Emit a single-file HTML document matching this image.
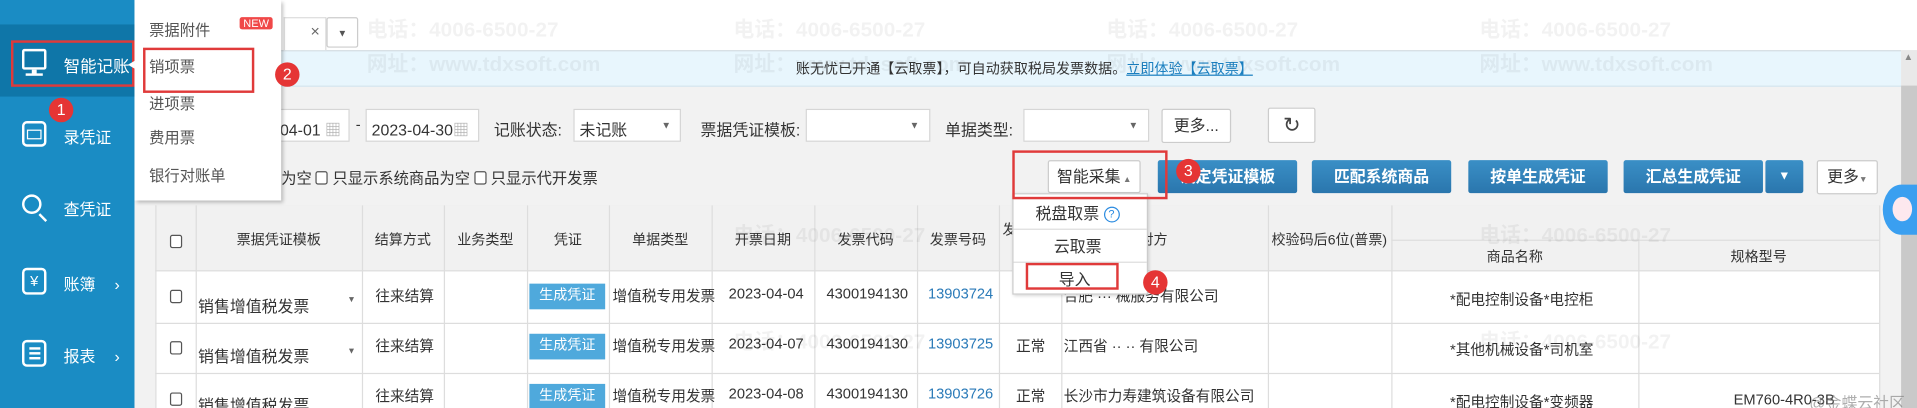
<!DOCTYPE html>
<html><head><meta charset="utf-8"><style>
*{margin:0;padding:0;box-sizing:border-box}
html,body{width:1917px;height:408px;overflow:hidden;background:#f2f2f2}
#w{position:absolute;left:0;top:0;width:1568px;height:334px;transform:scale(1.22258);transform-origin:0 0;font-family:"Liberation Sans","Noto Sans CJK SC",sans-serif;font-size:12px;color:#333;background:#f2f2f2;overflow:hidden}
.a{position:absolute;white-space:nowrap}
.sb{left:0;top:0;width:110px;height:334px;background:#1a8cc4}
.si{color:#fff;font-size:13px}
.ic{position:absolute;width:20px;height:20px;border:2px solid #fff;border-radius:4px}
.red{border:2px solid #e03a3a}
.dot{width:20px;height:20px;border-radius:50%;background:#e53535;color:#fff;font-size:13px;text-align:center;line-height:20px}
.inp{background:#fff;border:1px solid #d6d6d6;height:27px}
.btn{background:linear-gradient(#3a8fc6,#2a76ad);color:#fff;font-weight:bold;font-size:13px;text-align:center;line-height:27px;height:27px;border-radius:2px}
.wbtn{background:#fff;border:1px solid #ccc;text-align:center;border-radius:2px}
.cb{width:10px;height:11px;border:1px solid #555;border-radius:2px;background:#fff;display:inline-block;vertical-align:-1px}
.th{color:#333;font-size:11.5px;text-align:center}
.vl{position:absolute;width:1px;background:#ddd}
.hl{position:absolute;height:1px;background:#ddd}
.gb{background:#4fa9dc;color:#fff;width:62px;height:21px;line-height:21px;text-align:center;font-size:11.5px}
.wm{color:rgba(0,0,0,0.05);font-size:17px;font-weight:bold}
.mi{color:#555;font-size:12.5px;left:122px}
</style></head><body><div id="w">
<div class="a" style="left:110px;top:0;width:1458px;height:41px;background:#fff"></div>
<div class="a" style="left:110px;top:41px;width:1445px;height:30px;background:#e8f6fd;border-top:1px solid #d5dde2;border-bottom:1px solid #d5e5ee"></div>
<div class="a" style="left:651px;top:48px;font-size:11.5px;color:#333">账无忧已开通【云取票】，可自动获取税局发票数据。<span style="color:#1a7fc0;text-decoration:underline">立即体验【云取票】</span></div>
<div class="a" style="left:232px;top:14px;width:35px;height:27px;background:#fff;border:1px solid #ddd;border-bottom:none"></div>
<div class="a" style="left:254px;top:18px;color:#666;font-size:13px">×</div>
<div class="a wbtn" style="left:267px;top:14px;width:26px;height:25px;font-size:8px;line-height:25px;color:#555">▼</div>
<div class="a" style="left:1555px;top:41px;width:13px;height:293px;background:#e9e9e9"></div>
<div class="a" style="left:1557px;top:42px;font-size:8px;color:#888">▲</div>
<div class="a" style="left:1555px;top:70px;width:13px;height:264px;background:#c9c9c9"></div>
<!-- filters -->
<div class="a inp" style="left:200px;top:89px;width:86px"></div>
<div class="a" style="left:229px;top:96px;font-size:13px">04-01 <span style="color:#aaa">▦</span></div>
<div class="a" style="left:291px;top:95px">-</div>
<div class="a inp" style="left:299px;top:89px;width:93px"></div>
<div class="a" style="left:304px;top:96px;font-size:13px">2023-04-30<span style="color:#aaa">▦</span></div>
<div class="a" style="left:404px;top:96px;font-size:13px">记账状态:</div>
<div class="a inp" style="left:469px;top:89px;width:88px"></div>
<div class="a" style="left:474px;top:96px;font-size:13px">未记账</div>
<div class="a" style="left:541px;top:98px;font-size:8px;color:#666">▼</div>
<div class="a" style="left:573px;top:96px;font-size:13px">票据凭证模板:</div>
<div class="a inp" style="left:659px;top:89px;width:102px"></div>
<div class="a" style="left:744px;top:98px;font-size:8px;color:#666">▼</div>
<div class="a" style="left:773px;top:96px;font-size:13px">单据类型:</div>
<div class="a inp" style="left:837px;top:89px;width:103px"></div>
<div class="a" style="left:923px;top:98px;font-size:8px;color:#666">▼</div>
<div class="a wbtn" style="left:950px;top:89px;width:57px;height:28px;line-height:26px;font-size:13px">更多...</div>
<div class="a wbtn" style="left:1037px;top:88px;width:39px;height:29px;line-height:27px;font-size:17px;color:#444">↻</div>
<!-- row2 -->
<div class="a" style="left:230px;top:135px;font-size:12.5px">为空 <span class="cb"></span> 只显示系统商品为空 <span class="cb"></span> 只显示代开发票</div>
<div class="a wbtn" style="left:857px;top:131px;width:76px;height:27px;line-height:25px;font-size:13px">智能采集<span style="font-size:7px;color:#777"> ▲</span></div>
<div class="a btn" style="left:947px;top:131px;width:114px">设定凭证模板</div>
<div class="a btn" style="left:1073px;top:131px;width:114px">匹配系统商品</div>
<div class="a btn" style="left:1201px;top:131px;width:114px">按单生成凭证</div>
<div class="a btn" style="left:1328px;top:131px;width:114px">汇总生成凭证</div>
<div class="a btn" style="left:1444px;top:131px;width:31px;font-size:10px">▼</div>
<div class="a wbtn" style="left:1486px;top:131px;width:50px;height:28px;line-height:26px;font-size:13px">更多<span style="font-size:7px;color:#777">▼</span></div>
<!-- table -->
<div class="a" style="left:127px;top:168px;width:1410px;height:166px;background:#fff;border-top:1px solid #ddd"></div>
<div class="a" style="left:127px;top:168px;width:1410px;height:54px;background:#f1f1f1;border-bottom:1px solid #ddd"></div>
<div class="hl" style="left:1138px;top:196px;width:399px"></div>
<div class="hl" style="left:127px;top:264px;width:1410px"></div>
<div class="hl" style="left:127px;top:305px;width:1410px"></div>
<div class="vl" style="left:127px;top:168px;height:166px"></div>
<div class="vl" style="left:160px;top:168px;height:166px"></div>
<div class="vl" style="left:296px;top:168px;height:166px"></div>
<div class="vl" style="left:363px;top:168px;height:166px"></div>
<div class="vl" style="left:431px;top:168px;height:166px"></div>
<div class="vl" style="left:498px;top:168px;height:166px"></div>
<div class="vl" style="left:582px;top:168px;height:166px"></div>
<div class="vl" style="left:666px;top:168px;height:166px"></div>
<div class="vl" style="left:750px;top:168px;height:166px"></div>
<div class="vl" style="left:817px;top:168px;height:166px"></div>
<div class="vl" style="left:868px;top:168px;height:166px"></div>
<div class="vl" style="left:1037px;top:168px;height:166px"></div>
<div class="vl" style="left:1138px;top:168px;height:166px"></div>
<div class="vl" style="left:1340px;top:196px;height:138px"></div>
<div class="vl" style="left:1537px;top:168px;height:166px"></div>
<div class="a" style="left:139px;top:191px"><span class="cb"></span></div>
<div class="a th" style="left:160px;top:188px;width:136px">票据凭证模板</div>
<div class="a th" style="left:296px;top:188px;width:67px">结算方式</div>
<div class="a th" style="left:363px;top:188px;width:68px">业务类型</div>
<div class="a th" style="left:431px;top:188px;width:67px">凭证</div>
<div class="a th" style="left:498px;top:188px;width:84px">单据类型</div>
<div class="a th" style="left:582px;top:188px;width:84px">开票日期</div>
<div class="a th" style="left:666px;top:188px;width:84px">发票代码</div>
<div class="a th" style="left:750px;top:188px;width:67px">发票号码</div>
<div class="a th" style="left:820px;top:180px">发</div>
<div class="a th" style="left:932px;top:188px">对方</div>
<div class="a th" style="left:1040px;top:188px">校验码后6位(普票)</div>
<div class="a th" style="left:1138px;top:202px;width:202px">商品名称</div>
<div class="a th" style="left:1340px;top:202px;width:197px">规格型号</div>
<!-- rows -->
<div class="a" style="left:139px;top:236px"><span class="cb"></span></div>
<div class="a" style="left:162px;top:240px;font-size:13px">销售增值税发票</div><div class="a" style="left:284px;top:242px;font-size:7px;color:#666">▼</div>
<div class="a" style="left:307px;top:233px">往来结算</div>
<div class="a gb" style="left:433px;top:232px">生成凭证</div>
<div class="a" style="left:501px;top:233px">增值税专用发票</div>
<div class="a" style="left:596px;top:233px">2023-04-04</div>
<div class="a" style="left:676px;top:233px">4300194130</div>
<div class="a" style="left:759px;top:233px;color:#2a7ab8">13903724</div>
<div class="a" style="left:1186px;top:236px">*配电控制设备*电控柜</div>
<div class="a" style="left:139px;top:278px"><span class="cb"></span></div>
<div class="a" style="left:162px;top:281px;font-size:13px">销售增值税发票</div><div class="a" style="left:284px;top:284px;font-size:7px;color:#666">▼</div>
<div class="a" style="left:307px;top:274px">往来结算</div>
<div class="a gb" style="left:433px;top:273px">生成凭证</div>
<div class="a" style="left:501px;top:274px">增值税专用发票</div>
<div class="a" style="left:596px;top:274px">2023-04-07</div>
<div class="a" style="left:676px;top:274px">4300194130</div>
<div class="a" style="left:759px;top:274px;color:#2a7ab8">13903725</div>
<div class="a" style="left:831px;top:274px">正常</div>
<div class="a" style="left:870px;top:274px">江西省 ·· ·· 有限公司</div>
<div class="a" style="left:1186px;top:277px">*其他机械设备*司机室</div>
<div class="a" style="left:139px;top:320px"><span class="cb"></span></div>
<div class="a" style="left:162px;top:321px;font-size:13px">销售增值税发票</div>
<div class="a" style="left:307px;top:315px">往来结算</div>
<div class="a gb" style="left:433px;top:314px">生成凭证</div>
<div class="a" style="left:501px;top:315px">增值税专用发票</div>
<div class="a" style="left:596px;top:315px">2023-04-08</div>
<div class="a" style="left:676px;top:315px">4300194130</div>
<div class="a" style="left:759px;top:315px;color:#2a7ab8">13903726</div>
<div class="a" style="left:831px;top:315px">正常</div>
<div class="a" style="left:870px;top:315px">长沙市力寿建筑设备有限公司</div>
<div class="a" style="left:1186px;top:320px">*配电控制设备*变频器</div>
<div class="a" style="left:1418px;top:320px">EM760-4R0-3B</div>
<div class="a" style="left:870px;top:233px">合肥 ··· 械服务有限公司</div>
<!-- watermark -->
<div class="a wm" style="left:300px;top:10px">电话：4006-6500-27</div>
<div class="a wm" style="left:600px;top:10px">电话：4006-6500-27</div>
<div class="a wm" style="left:905px;top:10px">电话：4006-6500-27</div>
<div class="a wm" style="left:1210px;top:10px">电话：4006-6500-27</div>
<div class="a wm" style="left:300px;top:38px">网址：www.tdxsoft.com</div>
<div class="a wm" style="left:600px;top:38px">网址：www.tdxsoft.com</div>
<div class="a wm" style="left:905px;top:38px">网址：www.tdxsoft.com</div>
<div class="a wm" style="left:1210px;top:38px">网址：www.tdxsoft.com</div>
<div class="a wm" style="left:600px;top:178px">电话：4006-6500-27</div>
<div class="a wm" style="left:1210px;top:178px">电话：4006-6500-27</div>
<div class="a wm" style="left:600px;top:265px">电话：4006-6500-27</div>
<div class="a wm" style="left:1210px;top:265px">电话：4006-6500-27</div>
<!-- sidebar -->
<div class="a sb"></div>
<div class="a" style="left:0;top:20px;width:110px;height:59px;background:#0f76a8"></div>
<div class="a red" style="left:9px;top:33px;width:101px;height:38px"></div>
<div class="ic" style="left:18px;top:40px;height:17px;border-radius:2px"></div>
<div class="a" style="left:26px;top:57px;width:4px;height:4px;background:#fff"></div>
<div class="a" style="left:21px;top:60px;width:14px;height:2px;background:#fff"></div>
<div class="a si" style="left:52px;top:43px;font-size:13.5px">智能记账</div>
<div class="a" style="left:104px;top:45px;color:#fff;font-size:10px">◀</div>
<div class="a dot" style="left:40px;top:80px">1</div>
<div class="ic" style="left:18px;top:99px;height:21px"></div>
<div class="a" style="left:22px;top:106px;width:12px;height:8px;border:1.5px solid #fff"></div>
<div class="a si" style="left:52px;top:102px">录凭证</div>
<div class="ic" style="left:18px;top:159px;width:16px;height:16px;border-radius:50%"></div>
<div class="a" style="left:31px;top:177px;width:8px;height:2px;background:#fff;transform:rotate(45deg)"></div>
<div class="a si" style="left:52px;top:161px">查凭证</div>
<div class="ic" style="left:18px;top:219px;height:22px;color:#fff;font-size:12px;text-align:center;line-height:18px">¥</div>
<div class="a si" style="left:52px;top:222px">账簿 <span style="margin-left:12px">›</span></div>
<div class="ic" style="left:18px;top:278px;height:22px"></div>
<div class="a" style="left:24px;top:284px;width:9px;height:2px;background:#fff;box-shadow:0 4px #fff,0 8px #fff"></div>
<div class="a si" style="left:52px;top:281px">报表 <span style="margin-left:12px">›</span></div>
<!-- popup menu -->
<div class="a" style="left:110px;top:0;width:120px;height:164px;background:#fff;box-shadow:2px 2px 3px rgba(0,0,0,0.25)"></div>
<div class="a mi" style="top:14px">票据附件</div>
<div class="a" style="left:196px;top:14px;background:#f04848;color:#fff;font-size:9px;padding:0 3px;border-radius:2px">NEW</div>
<div class="a mi" style="top:44px">销项票</div>
<div class="a red" style="left:117px;top:39px;width:91px;height:37px"></div>
<div class="a mi" style="top:74px">进项票</div>
<div class="a mi" style="top:102px">费用票</div>
<div class="a mi" style="top:133px">银行对账单</div>
<div class="a dot" style="left:225px;top:51px">2</div>
<!-- dropdown -->
<div class="a" style="left:828px;top:158px;width:111px;height:83px;background:#fff;border:1px solid #ccc;box-shadow:1px 1px 3px rgba(0,0,0,.2)"></div>
<div class="a" style="left:847px;top:164px;font-size:13px">税盘取票 <span style="display:inline-block;width:13px;height:13px;border:1.5px solid #2b8be0;border-radius:50%;color:#2b8be0;font-size:9px;text-align:center;line-height:11px;vertical-align:1px">?</span></div>
<div class="hl" style="left:829px;top:187px;width:109px"></div>
<div class="a" style="left:862px;top:191px;font-size:13px">云取票</div>
<div class="hl" style="left:829px;top:214px;width:109px"></div>
<div class="a" style="left:866px;top:218px;font-size:13px">导入</div>
<div class="a red" style="left:839px;top:215px;width:76px;height:22px"></div>
<div class="a red" style="left:828px;top:123px;width:127px;height:40px"></div>
<div class="a dot" style="left:962px;top:130px">3</div>
<div class="a dot" style="left:935px;top:221px">4</div>
<!-- mascot -->
<div class="a" style="left:1540px;top:151px;width:30px;height:41px;background:#3a9ff0;border-radius:50% 0 0 50%"></div>
<div class="a" style="left:1548px;top:161px;width:16px;height:20px;background:#fde8ee;border-radius:50%"></div>
<div class="a" style="left:1480px;top:319px;color:rgba(120,120,120,0.6);font-size:13px">@金蝶云社区</div>
</div></body></html>
